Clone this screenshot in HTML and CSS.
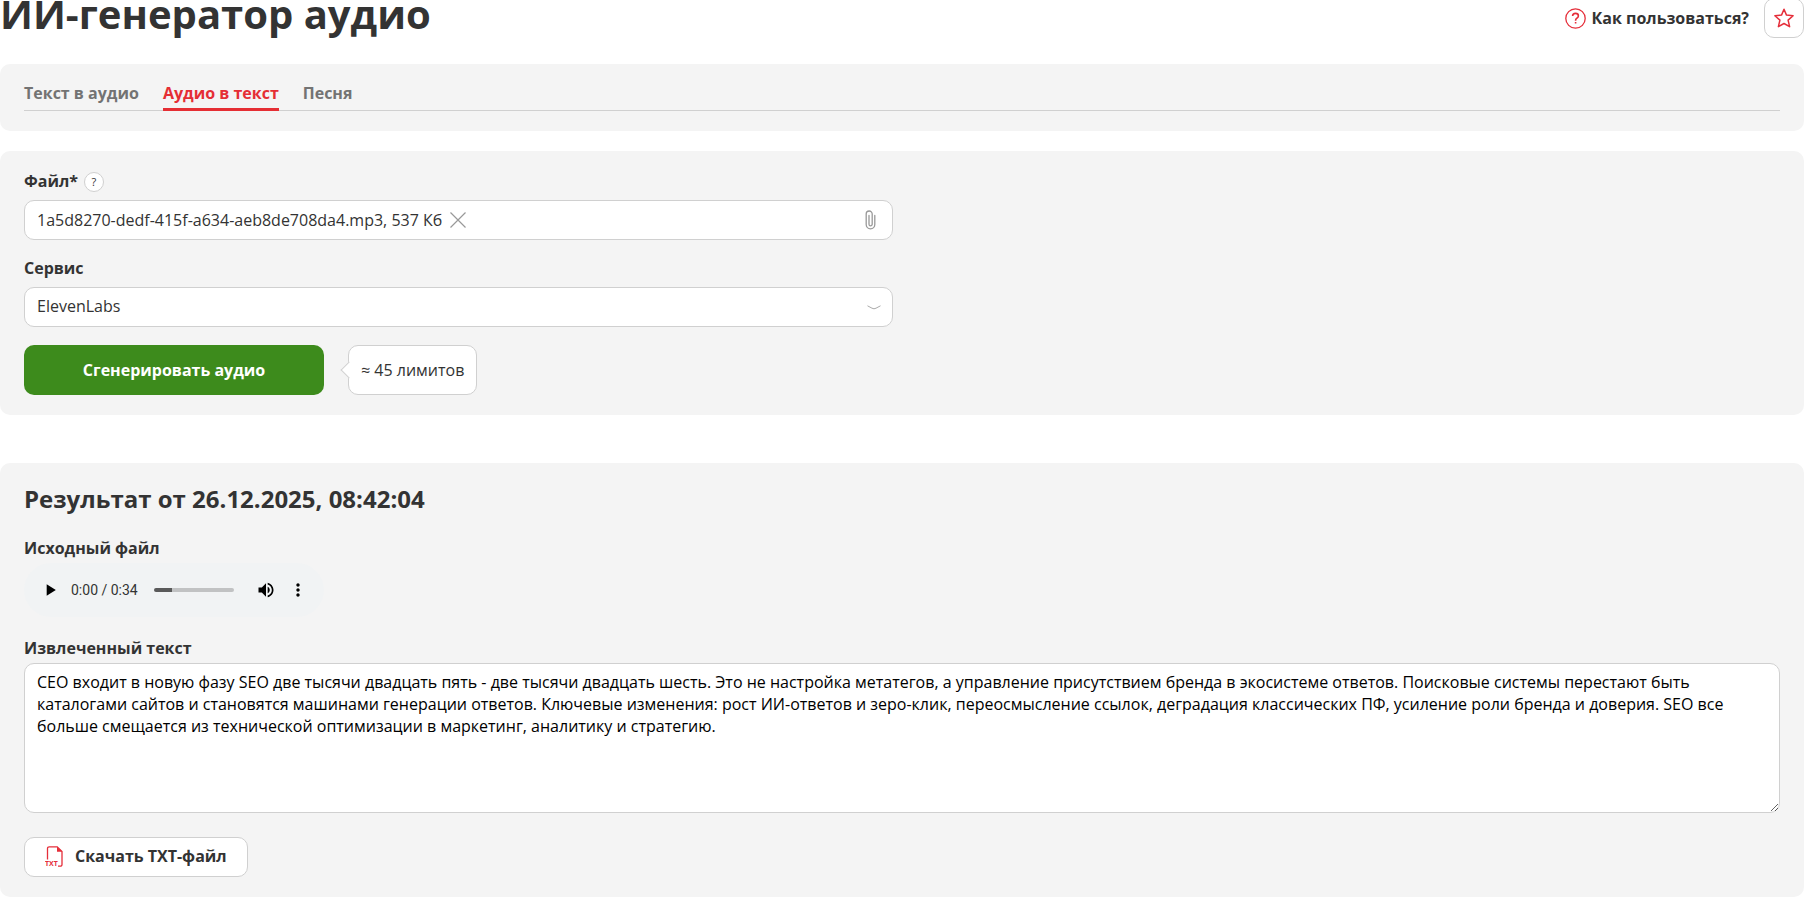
FILE: index.html
```html
<!DOCTYPE html>
<html lang="ru">
<head>
<meta charset="utf-8">
<meta name="viewport" content="width=device-width, initial-scale=1">
<title>ИИ-генератор аудио</title>
<link rel="stylesheet" href="styles.css">
</head>
<body>
<header class="header">
  <h1 class="title">ИИ-генератор аудио</h1>
  <div class="header-actions">
    <a class="help-link" href="#">
      <svg width="21" height="21" viewBox="0 0 21 21" fill="none" stroke="currentColor" aria-hidden="true">
        <circle cx="10.5" cy="10.5" r="9.7" stroke-width="1.3"/>
        <path d="M7.6 8.1c0-1.7 1.2-2.7 2.9-2.7s2.9 1 2.9 2.5c0 2.2-2.8 2.3-2.8 4.3v.6M10.6 14v1.6" stroke-width="1.6"/>
      </svg>
      Как пользоваться?
    </a>
    <button class="star" type="button" aria-label="В избранное">
      <svg width="20" height="20" viewBox="0 0 20 20" fill="none" stroke="currentColor" stroke-width="1.5" stroke-linejoin="round" aria-hidden="true">
        <path d="M10 1.2l2.5 5.9 6.6.6-5 4.4 1.5 6.6-5.600-3.200-5.600 3.200 1.500-6.600-5-4.400 6.600-.6z"/>
      </svg>
    </button>
  </div>
</header>

<nav class="panel">
  <div class="tabs">
    <a class="tab" href="#">Текст в аудио</a>
    <a class="tab tab-active" href="#" aria-current="page">Аудио в текст</a>
    <a class="tab" href="#">Песня</a>
  </div>
</nav>

<form class="panel form">
  <div class="field">
    <div class="label-row">
      <label class="label" for="file">Файл*</label>
      <button class="hint" type="button" aria-label="Подсказка">?</button>
    </div>
    <div class="control file">
      <input class="file-input" id="file" type="file">
      <span>1a5d8270-dedf-415f-a634-aeb8de708da4.mp3, 537 Кб</span>
      <button class="icon-button" type="button" aria-label="Удалить файл">
        <svg width="16" height="16" viewBox="0 0 16 16" fill="none" stroke="#999" stroke-width="1.2" aria-hidden="true"><path d="M.5.5l15 15M15.500.5l-15 15"/></svg>
      </button>
      <button class="icon-button attach" type="button" aria-label="Выбрать файл">
        <svg width="11" height="20" viewBox="0 0 11 20" fill="none" stroke="#999" stroke-width="1.3" stroke-linecap="round" aria-hidden="true"><path d="M9.800 5.500v9a4.200 4.200 0 0 1-8.600 0V4a3 3 0 0 1 6 0v10.200a1.600 1.600 0 0 1-3.200 0V5.500"/></svg>
      </button>
    </div>
  </div>
  <div class="field">
    <label class="label" for="service">Сервис</label>
    <div class="select-wrap">
      <select class="control select" id="service"><option>ElevenLabs</option></select>
      <svg class="chevron" width="14" height="5" viewBox="0 0 14 5" fill="none" stroke="#aaa" aria-hidden="true"><path d="M.5.8l4.500 2.400q2 1.200 4 0l4.500-2.400"/></svg>
    </div>
  </div>
  <div class="submit-row">
    <button class="submit" type="button">Сгенерировать аудио</button>
    <div class="cost">≈ 45 лимитов</div>
  </div>
</form>

<section class="panel result">
  <h2 class="result-title">Результат от 26.12.2025, 08:42:04</h2>
  <div class="result-block">
    <div class="label">Исходный файл</div>
    <div class="player">
      <button class="icon-button" type="button" aria-label="Воспроизвести">
        <svg width="20" height="20" viewBox="0 0 24 24" aria-hidden="true"><path d="M8 5v14l11-7z"/></svg>
      </button>
      <span class="time">0:00 / 0:34</span>
      <input class="seek" type="range" min="0" max="34" value="0" aria-label="Позиция">
      <button class="icon-button" type="button" aria-label="Громкость">
        <svg width="20" height="20" viewBox="0 0 24 24" aria-hidden="true"><path d="M3 9v6h4l5 5V4L7 9H3zm13.500 3c0-1.770-1.020-3.290-2.500-4.030v8.050c1.480-.73 2.500-2.250 2.500-4.020zM14 3.230v2.060c2.890.86 5 3.540 5 6.710s-2.110 5.850-5 6.710v2.060c4.010-.91 7-4.490 7-8.770s-2.990-7.860-7-8.770z"/></svg>
      </button>
      <button class="icon-button" type="button" aria-label="Ещё">
        <svg width="20" height="20" viewBox="0 0 24 24" aria-hidden="true"><path d="M12 8c1.100 0 2-.9 2-2s-.9-2-2-2-2 .9-2 2 .9 2 2 2zm0 2c-1.100 0-2 .9-2 2s.9 2 2 2 2-.9 2-2-.9-2-2-2zm0 6c-1.100 0-2 .9-2 2s.9 2 2 2 2-.9 2-2-.9-2-2-2z"/></svg>
      </button>
    </div>
  </div>
  <div class="result-block">
    <label class="label" for="text">Извлеченный текст</label>
    <textarea class="text" id="text" spellcheck="false">СЕО входит в новую фазу SEO две тысячи двадцать пять - две тысячи двадцать шесть. Это не настройка метатегов, а управление присутствием бренда в экосистеме ответов. Поисковые системы перестают быть каталогами сайтов и становятся машинами генерации ответов. Ключевые изменения: рост ИИ-ответов и зеро-клик, переосмысление ссылок, деградация классических ПФ, усиление роли бренда и доверия. SEO все больше смещается из технической оптимизации в маркетинг, аналитику и стратегию.</textarea>
  </div>
  <button class="download" type="button">
    <svg width="18" height="21" viewBox="0 0 18 21" aria-hidden="true">
      <path d="M2.500 13.500V2.500a1.700 1.700 0 0 1 1.700-1.700h8l4.800 4.800v12.900a1.700 1.700 0 0 1-1.700 1.700h-2.300" fill="none" stroke="currentColor" stroke-width="1.300"/>
      <path d="M12 .6l5.200 5.200H12z" fill="currentColor"/>
      <text class="file-type" x="0" y="20">TXT</text>
    </svg>
    Скачать TXT-файл
  </button>
</section>
</body>
</html>
```
FILE: styles.css
```css
* {
  box-sizing: border-box;
}

body {
  margin: 0;
  color: #333;
  background: #fff;
  font: 16px/22px "Open Sans", "Noto Sans", sans-serif;
}

button,
select,
textarea {
  font: inherit;
  color: inherit;
}

button {
  cursor: pointer;
}

a {
  color: inherit;
  text-decoration: none;
}

.header {
  display: flex;
  align-items: flex-start;
  justify-content: space-between;
  margin: -14px 0 22px;
}

.title {
  margin: 0;
  font-size: 40px;
  line-height: 56px;
}

.header-actions {
  display: flex;
  align-items: center;
  gap: 15px;
  padding-top: 12px;
}

.help-link {
  display: flex;
  align-items: center;
  gap: 6px;
  font-weight: 700;
}

.help-link svg {
  color: #e52e3a;
}

.star {
  display: grid;
  place-items: center;
  width: 40px;
  height: 40px;
  padding: 0;
  color: #e52e3a;
  background: #fff;
  border: 1px solid #d0d0d0;
  border-radius: 10px;
}

.panel {
  padding: 20px 24px;
  background: #f4f4f4;
  border-radius: 10px;
}

.tabs {
  display: flex;
  gap: 24px;
  box-shadow: inset 0 -1px #d0d0d0;
}

.tab {
  padding-bottom: 6px;
  color: #737373;
  font-weight: 700;
  line-height: 18px;
  border-bottom: 3px solid transparent;
}

.tab-active {
  color: #e52e34;
  border-bottom-color: #e52e34;
}

.form {
  display: grid;
  grid-template-columns: 1fr 1fr;
  gap: 18px;
  margin-top: 20px;
}

.field,
.submit-row {
  grid-column: 1;
}

.field {
  display: flex;
  flex-direction: column;
  gap: 7px;
}

.label-row {
  display: flex;
  align-items: center;
  gap: 6px;
}

.label {
  font-weight: 700;
}

.form .label {
  padding-bottom: 2px;
  line-height: 20px;
}

.hint {
  width: 20px;
  height: 20px;
  padding: 0;
  font-size: 11px;
  line-height: 18px;
  background: #fff;
  border: 1px solid #d0d0d0;
  border-radius: 50%;
}

.control {
  width: 100%;
  height: 40px;
  padding: 0 12px;
  background: #fff;
  border: 1px solid #d0d0d0;
  border-radius: 10px;
}

.file {
  position: relative;
  display: flex;
  align-items: center;
  gap: 8px;
}

.file-input {
  position: absolute;
  width: 1px;
  height: 1px;
  opacity: 0;
}

.icon-button {
  display: grid;
  place-items: center;
  padding: 0;
  background: none;
  border: 0;
}

.attach {
  margin-left: auto;
  padding-right: 4px;
}

.select-wrap {
  position: relative;
}

.select {
  display: block;
  padding-bottom: 2px;
  appearance: none;
}

.chevron {
  position: absolute;
  top: 18px;
  right: 12px;
  pointer-events: none;
}

.submit-row {
  display: flex;
  gap: 24px;
}

.submit {
  width: 300px;
  height: 50px;
  color: #fff;
  font-weight: 700;
  background: #3d8b1c;
  border: 0;
  border-radius: 10px;
}

.cost {
  position: relative;
  display: flex;
  align-items: center;
  padding: 0 12px;
  background: #fff;
  border: 1px solid #d0d0d0;
  border-radius: 10px;
}

.cost::before {
  position: absolute;
  top: 18px;
  left: -6px;
  width: 11px;
  height: 11px;
  content: "";
  background: #fff;
  border: 1px solid #d0d0d0;
  border-width: 0 0 1px 1px;
  transform: rotate(45deg);
}

.result {
  display: flex;
  flex-direction: column;
  gap: 20px;
  margin-top: 48px;
}

.result-title {
  margin: 0;
  padding-bottom: 2px;
  font-size: 24px;
  line-height: 32px;
}

.result-block {
  display: flex;
  flex-direction: column;
  gap: 4px;
}

.player {
  display: flex;
  align-items: center;
  width: 300px;
  height: 54px;
  padding: 0 16px;
  color: #000;
  background: #f1f3f4;
  border-radius: 27px;
}

.time {
  margin: 0 16px 0 11px;
  font: 14px/20px Roboto, sans-serif;
  color: #333;
}

.seek {
  flex: 1;
  min-width: 0;
  height: 4px;
  margin: 0 22px 0 0;
  appearance: none;
  background: linear-gradient(90deg, #5a5a5a 18px, #c1c2c3 18px);
  border-radius: 2px;
}

.seek::-webkit-slider-thumb {
  width: 0;
  height: 0;
  appearance: none;
}

.player .icon-button:last-child {
  margin-left: 12px;
}

.text {
  display: block;
  width: 100%;
  height: 150px;
  padding: 7px 12px;
  color: #000;
  background: #fff;
  border: 1px solid #d0d0d0;
  border-radius: 10px;
  resize: vertical;
}

.download {
  display: flex;
  align-items: center;
  align-self: flex-start;
  gap: 12px;
  height: 40px;
  margin-top: 4px;
  padding: 0 20px 2px;
  font-weight: 700;
  background: #fff;
  border: 1px solid #d0d0d0;
  border-radius: 10px;
}

.download svg {
  color: #e52e3a;
}

.file-type {
  font: 700 7px "Open Sans", sans-serif;
  fill: currentColor;
}
```
